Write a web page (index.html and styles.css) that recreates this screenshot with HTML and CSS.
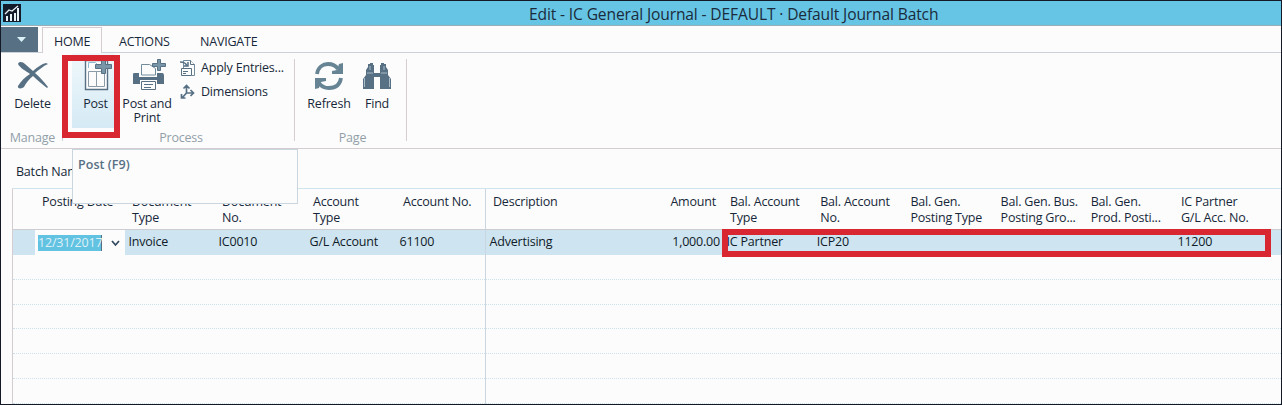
FILE: index.html
```html
<!DOCTYPE html>
<html lang="en">
<head>
<meta charset="utf-8">
<title>Edit - IC General Journal</title>
<link rel="stylesheet" href="styles.css">
</head>
<body>
<div class="window">
  <header class="titlebar">
    <svg class="app-icon" width="18" height="18" viewBox="0 0 18 18"><path fill="#141b2a" d="M0 0h18v18H0z"/><path fill="#e8f4f8" d="M3 12h2v5H3zM7 10h2v7H7zM11 9h2v8h-2zM14 4h2v13h-2z"/><path d="M2 10L6 6l3 1 6-5" fill="none" stroke="#e8f4f8" stroke-width="1.3"/></svg>
    <h1 class="title">Edit - IC General Journal - DEFAULT · Default Journal Batch</h1>
  </header>
  <nav class="tabs">
    <button class="app-menu" aria-label="Menu"><svg width="10" height="6" viewBox="0 0 10 6"><path fill="#d9f1f7" d="M0 0h9L4.500 5z"/></svg></button>
    <span class="tab active">HOME</span>
    <span class="tab actions">ACTIONS</span>
    <span class="tab navigate">NAVIGATE</span>
  </nav>
  <section class="ribbon">
    <div class="group manage">
      <div class="tools"><div class="tool delete">
        <svg width="34" height="32" viewBox="0 0 34 32"><path fill="#587084" d="M2 4C3 1 7 2 9 4l8 7c4-4 9-7 13-8l2 1c-5 2-9 6-13 9 5 4 9 9 13 14l-1 1c-5-4-10-8-14-12-4 3-7 7-9 11-2 2-7 2-6-1 3-5 7-9 12-12C10 11 4 8 2 4z"/></svg>
        <span>Delete</span></div></div>
      <div class="caption">Manage</div>
    </div>
    <div class="group process">
      <div class="tools">
        <div class="tool post">
          <svg width="32" height="34" viewBox="0 0 32 34"><path fill="#fcfcfc" stroke="#587084" stroke-width="1.400" d="M3.500 2.500h22v29h-22z"/><path d="M6.500 13.500h8v15h-8zM14.500 13.500h8v15h-8z" fill="#fcfcfc" stroke="#8b9ba7"/><path d="M6.500 10V4.500h7l3 3" fill="none" stroke="#8ebbd1"/><path fill="#7896a7" stroke="#587084" d="M19.500 1.500h4v5h6v4h-6v5h-4v-5h-6v-4h6z"/></svg>
          <span>Post</span></div>
        <div class="tool print">
          <svg width="34" height="34" viewBox="0 0 34 34"><path fill="#fcfcfc" stroke="#718c9c" d="M9.500 17V6.500h8l6 4V17z"/><path fill="#587084" d="M2 15h5v4h18v-4h5c2 0 2 2 2 3v8h-7v-4H8v4H1v-8c0-2 0-3 1-3z"/><path fill="#fcfcfc" stroke="#587084" d="M9.500 23.500h14v8h-14z"/><path stroke="#587084" d="M12 26.500h9M12 29.500h7"/><path fill="#7896a7" stroke="#587084" d="M25.500 1.500h3v4h5v3h-5v4h-3v-4h-5v-3h5z"/></svg>
          <span>Post and<br>Print</span></div>
        <div class="small-tools">
          <div class="small-tool"><svg width="16" height="18" viewBox="0 0 16 18"><path fill="#fcfcfc" stroke="#718c9c" d="M3.500 10V1.500h7l4 4v11h-3"/><path fill="#fcfcfc" stroke="#587084" d="M1.500 9.500h10v7h-10zM3 12.500h5M3 14.500h3M10.500 1.500v4h4"/><path d="M0 3c3 0 6 1 7 4M4 7h4V3" fill="none" stroke="#587084" stroke-width="1.500"/></svg><span>Apply Entries...</span></div>
          <div class="small-tool"><svg width="16" height="16" viewBox="0 0 16 16"><g fill="none" stroke="#587084" stroke-width="1.700"><path d="M6.500 9V2M6.500 9h7M6.500 9L2 14M3.500 4.500l3-3 3 3M10.500 6l3 3-3 3M1.500 10v4h4"/></g></svg><span class="dimensions">Dimensions</span></div>
        </div>
      </div>
      <div class="caption">Process</div>
      <div class="marker post-marker"></div>
    </div>
    <div class="group page">
      <div class="tools">
        <div class="tool refresh"><svg width="30" height="30" viewBox="0 0 30 30"><g fill="none" stroke="#668494" stroke-width="3.800"><path d="M3 13C4 6 9 3 14 3c5 0 8 2 10 5M27 17c-1 7-6 10-12 10-5 0-8-2-10-5"/></g><path fill="#668494" d="M25 3l4-1v11H18v-3l5-1zM5 27l-4 1V17h11v3l-5 1z"/></svg><span>Refresh</span></div>
        <div class="tool find"><svg width="30" height="28" viewBox="0 0 30 28"><path fill="#587084" d="M6 4V2h2V1h3v2h1v8h6V3h1V1h3v1h2v3l2 3v5l3 4v10H18V15h-6v12H1V17l3-4V8l2-3z"/><path d="M5 11h6M19 11h6M2.500 16v9M27.500 16v9M8 4v4M22 4v4" stroke="#a9bcc7"/></svg><span>Find</span></div>
      </div>
      <div class="caption">Page</div>
    </div>
  </section>
  <main class="content">
    <div class="batch">Batch Name:</div>
    <div class="grid">
      <div class="row head">
        <span></span><span>Posting Date</span><span>Document<br>Type</span><span>Document<br>No.</span><span>Account<br>Type</span><span>Account No.</span><span class="desc">Description</span><span class="amount">Amount</span><span>Bal. Account<br>Type</span><span>Bal. Account<br>No.</span><span>Bal. Gen.<br>Posting Type</span><span>Bal. Gen. Bus.<br>Posting Gro...</span><span>Bal. Gen.<br>Prod. Posti...</span><span>IC Partner<br>G/L Acc. No.</span>
      </div>
      <div class="row current">
        <span></span><span class="date"><b>12/31/2017</b><svg width="9" height="7" viewBox="0 0 9 7"><path d="M1 1l3.500 4L8 1" fill="none" stroke="#344b60" stroke-width="1.800"/></svg></span><span>Invoice</span><span>IC0010</span><span>G/L Account</span><span>61100</span><span class="desc">Advertising</span><span class="amount">1,000.00</span><span>IC Partner</span><span>ICP20</span><span></span><span></span><span></span><span>11200</span>
        <div class="marker row-marker"></div>
      </div>
      <div class="blank"></div><div class="blank"></div><div class="blank"></div><div class="blank"></div><div class="blank"></div><div class="blank"></div>
      <div class="freeze"></div>
    </div>
    <div class="tooltip">Post (F9)</div>
  </main>
</div>
</body>
</html>
```
FILE: styles.css
```css
* { box-sizing: border-box; }
body { margin: 0; background: #fcfcfc; color: #17283a; font: 12.5px/16px "Open Sans", "Noto Sans", sans-serif; letter-spacing: -.2px; }
.window { width: 1282px; height: 405px; border: 1px solid #141927; overflow: hidden; display: flex; flex-direction: column; background: #fcfcfc; }
svg { display: block; flex: none; }
.titlebar { height: 25px; background: #66c5e4; border-bottom: 1px solid #9caeb5; display: flex; padding: 3px 0 0 2px; flex: none; }
.title { margin: 0 0 0 508px; font-size: 15.6px; font-weight: 400; line-height: 20px; white-space: nowrap; letter-spacing: -.14px; color: #1b2b3c; }
.tabs { height: 27px; border-bottom: 1px solid #cbd0d9; display: flex; flex: none; }
.app-menu { width: 37px; height: 25px; margin-top: 1px; border: 0; padding: 0 0 0 4px; background: #587084; display: grid; place-items: center; }
.tab { height: 26px; margin-top: 1px; padding-top: 7px; letter-spacing: -.2px; }
.tab.active { width: 60px; margin-left: 4px; padding: 6px 0 0 11px; border: 1px solid #d5cdd2; border-bottom: 0; background: #fcfcfc; }
.actions { margin-left: 17px; width: 81px; }
.ribbon { height: 96px; display: flex; flex: none; border-bottom: 1px solid #d5cdd2; }
.group { position: relative; display: flex; flex-direction: column; }
.group::after { content: ""; position: absolute; right: 0; top: 6px; bottom: 7px; width: 1px; background: #d5cdd2; }
.manage { width: 62px; padding-left: 1px; }
.process { width: 232px; }
.page { width: 112px; }
.tools { display: flex; height: 77px; }
.tool { display: flex; flex-direction: column; align-items: center; text-align: center; line-height: 14px; white-space: nowrap; padding-top: 7px; }
.tool span { margin-top: auto; height: 33px; }
.delete { width: 64px; }
.post { width: 43px; margin-left: 9px; background: linear-gradient(#f0f8fb, #d5eaf5); height: 75px; padding-top: 5px; }
.post span { height: 31px; margin-left: 4px; }
.post svg { margin-left: 9px; }
.print { width: 58px; margin-left: 3px; padding-top: 5px; }
.print svg { margin-left: 4px; }
.small-tools { margin-left: 4px; padding-top: 6px; display: flex; flex-direction: column; gap: 6px; }
.small-tool { display: flex; gap: 5px; height: 18px; align-items: center; white-space: nowrap; }
.refresh { width: 50px; margin-left: 9px; padding-top: 8px; }
.find { width: 46px; padding-top: 9px; }
.caption { color: #929fa9; text-align: center; }
.process .caption { padding-left: 4px; }
.page .caption { padding-left: 3px; }
.marker { position: absolute; border: 6px solid #d92732; }
.post-marker { left: -1px; top: 2px; width: 58px; height: 83px; }
.content { position: relative; flex: 1; padding: 15px 0 0 11px; }
.batch { height: 24px; padding-left: 4px; }
.grid { position: relative; border-top: 1px solid #cfe4ed; border-left: 1px solid #d5cdd2; height: 218px; }
.row { display: grid; grid-template-columns: 22px 90px 90px 91px 90px 90px 147px 90px repeat(5, 90.200px) 1fr; position: relative; white-space: nowrap; }
.head { height: 41px; padding-top: 5px; border-bottom: 1px solid #ccccd1; }
.head > span { padding-left: 7px; }
.row .amount { text-align: right; padding-right: 7px; }
.current { height: 25px; background: #cee4f0; line-height: 23px; color: #101b29; }
.current > span { padding-left: 3.500px; }
.current .amount { padding-right: 3px; }
.current .date { padding-left: 3px; background: #fcfcfc; display: flex; align-items: center; }
.date b { font-weight: 400; background: #62c2e2; color: #dff1f7; width: 64px; line-height: 16px; border-right: 1px solid #587084; }
.date svg { margin: 2px 0 0 9px; }
.row-marker { left: 709px; top: -1px; width: 549px; height: 28px; }
.blank { height: 24.800px; border-bottom: 1px dotted #cce1ec; }
.freeze { position: absolute; left: 472px; top: 0; bottom: 0; width: 1px; background: #c9d5df; }
.tooltip { position: absolute; left: 71px; top: 0; width: 226px; height: 55px; padding: 7px 5px; background: #fcfcfc; border: 1px solid #c9d5df; color: #587084; font-weight: 600; letter-spacing: .05px; }
```
